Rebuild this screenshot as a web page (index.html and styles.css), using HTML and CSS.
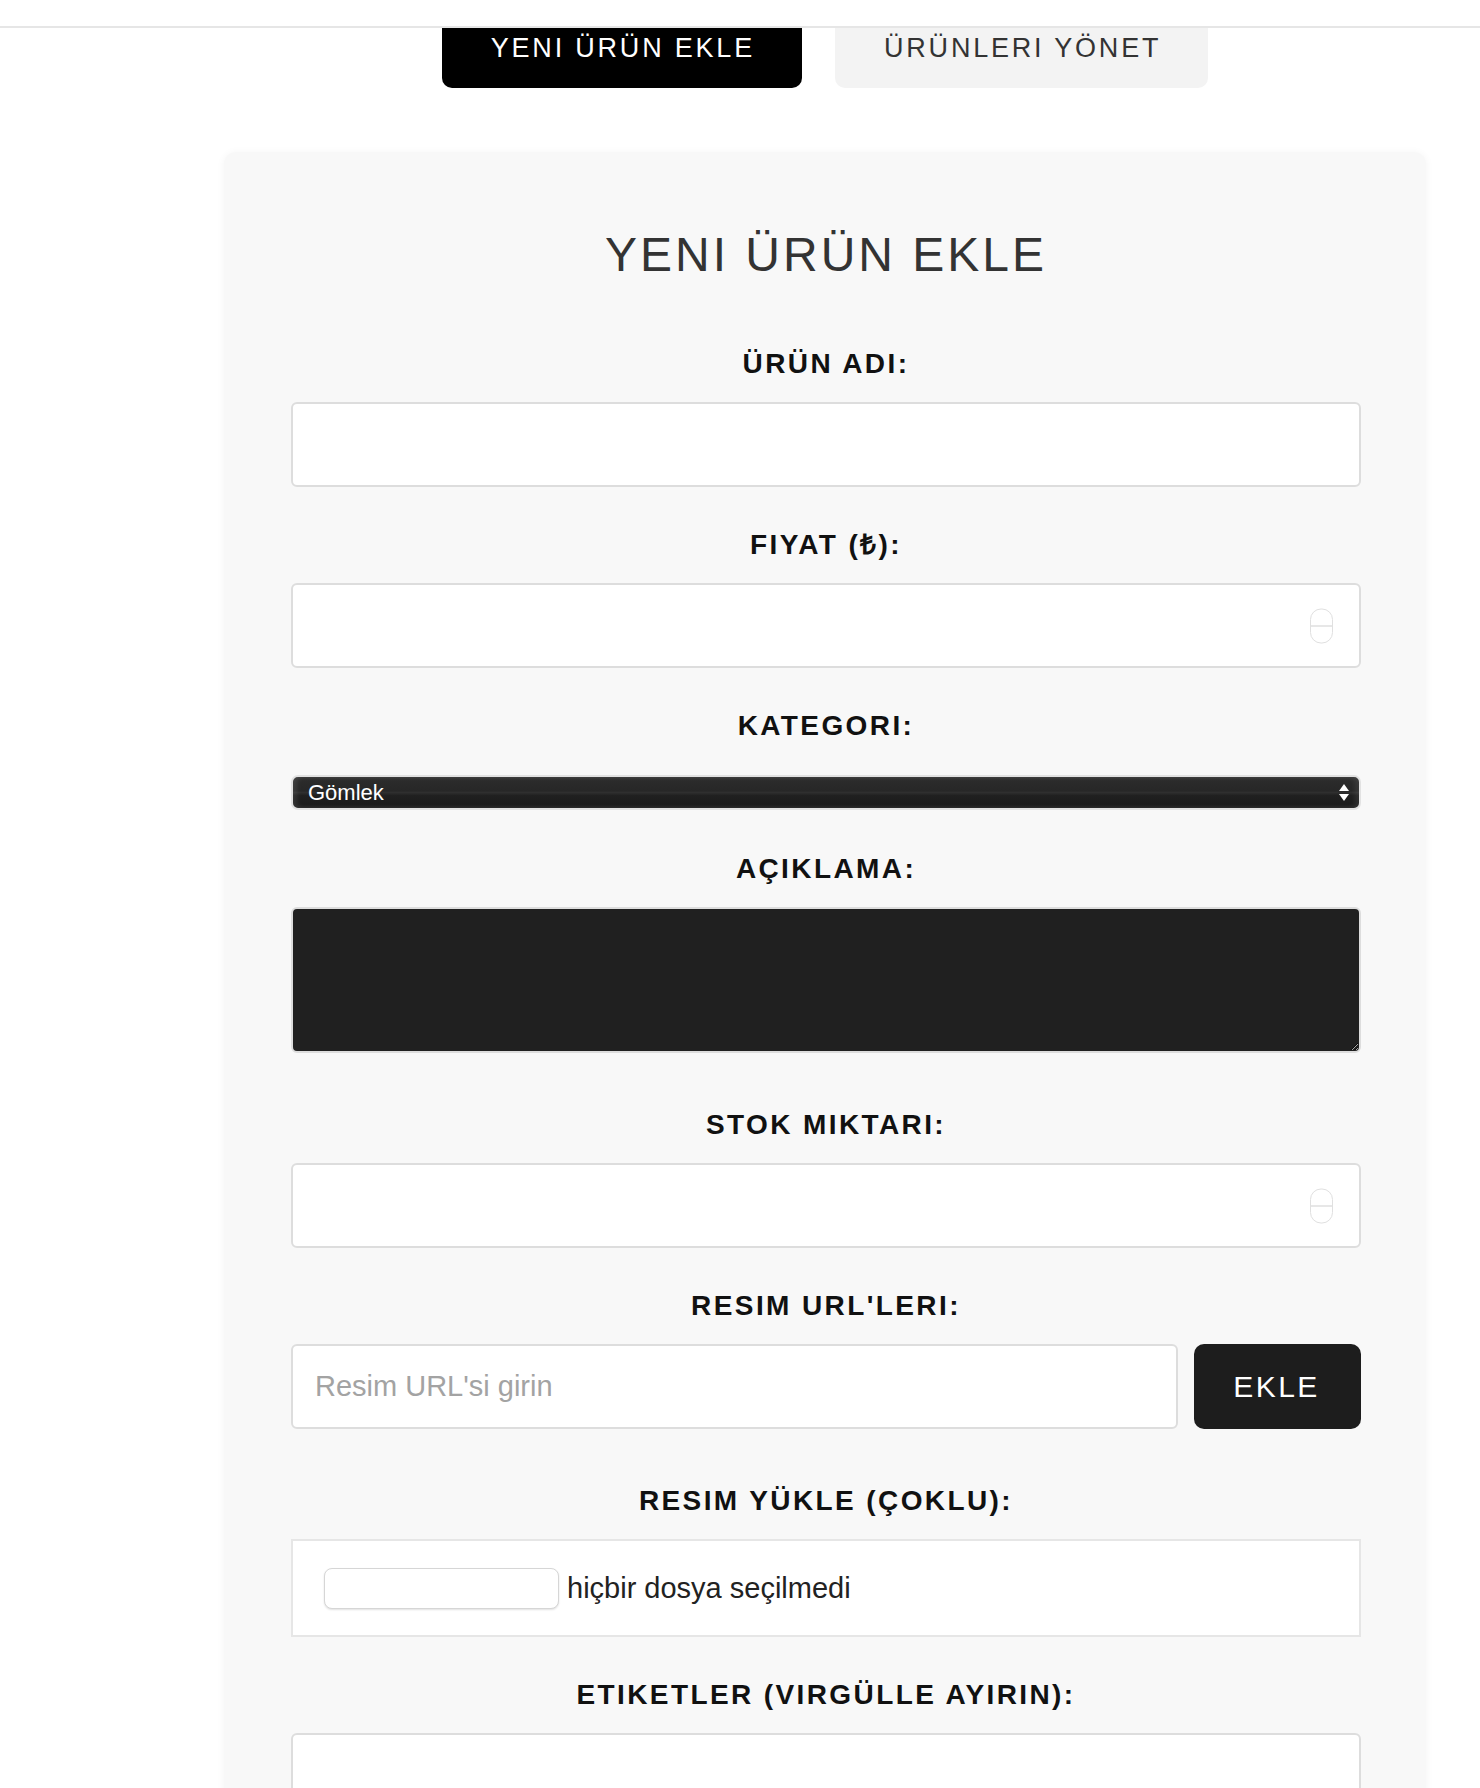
FILE: index.html
```html
<!DOCTYPE html>
<html lang="tr">
<head>
<meta charset="utf-8">
<title>Yeni Ürün Ekle</title>
<link rel="stylesheet" href="styles.css">
</head>
<body>
<header class="topbar"></header>
<main class="main">
  <nav class="tabs">
    <button type="button" class="tab tab-active">YENI ÜRÜN EKLE</button>
    <button type="button" class="tab">ÜRÜNLERI YÖNET</button>
  </nav>

  <section class="card">
    <h1 class="card-title">YENI ÜRÜN EKLE</h1>
    <form class="form">
      <div class="group">
        <label class="label">ÜRÜN ADI:</label>
        <input class="field" type="text">
      </div>
      <div class="group">
        <label class="label">FIYAT (₺):</label>
        <div class="number-wrap">
          <input class="field field-number" type="number">
          <span class="spinner"></span>
        </div>
      </div>
      <div class="group group-select">
        <label class="label">KATEGORI:</label>
        <div class="select-wrap">
          <select class="select">
            <option>Gömlek</option>
            <option>Pantolon</option>
            <option>Ceket</option>
          </select>
          <span class="select-arrows"><span class="arrow-up"></span><span class="arrow-down"></span></span>
        </div>
      </div>
      <div class="group group-extra">
        <label class="label">AÇIKLAMA:</label>
        <textarea class="textarea"></textarea>
      </div>
      <div class="group">
        <label class="label">STOK MIKTARI:</label>
        <div class="number-wrap">
          <input class="field field-number" type="number">
          <span class="spinner"></span>
        </div>
      </div>
      <div class="group group-extra">
        <label class="label">RESIM URL'LERI:</label>
        <div class="url-row">
          <input class="field field-url" type="text" placeholder="Resim URL'si girin">
          <button type="button" class="add-btn">EKLE</button>
        </div>
      </div>
      <div class="group">
        <label class="label">RESIM YÜKLE (ÇOKLU):</label>
        <div class="file-box">
          <button type="button" class="file-btn"></button>
          <span class="file-text">hiçbir dosya seçilmedi</span>
        </div>
      </div>
      <div class="group">
        <label class="label">ETIKETLER (VIRGÜLLE AYIRIN):</label>
        <input class="field" type="text">
      </div>
      <div class="group">
        <button type="submit" class="submit-btn">ÜRÜNÜ EKLE</button>
      </div>
    </form>
  </section>
</main>
</body>
</html>
```

FILE: styles.css
```css
html {
  scrollbar-width: none;
}
html::-webkit-scrollbar {
  display: none;
}
body {
  margin: 0;
  background: #ffffff;
  font-family: "Liberation Sans", Arial, Helvetica, sans-serif;
  color: #111;
}

.topbar {
  height: 26px;
  background: #fff;
  border-bottom: 2px solid #e6e6e6;
}

.main {
  width: 1310px;
  margin-left: 170px;
  display: flex;
  flex-direction: column;
  align-items: center;
}

.tabs {
  display: flex;
  gap: 33px;
  margin-bottom: 64px;
}

.tab {
  height: 60px;
  padding: 5px 47px 0 49px;
  display: flex;
  align-items: flex-start;
  border: none;
  border-radius: 0 0 10px 10px;
  background: #f3f3f3;
  color: #333;
  font-family: "Liberation Sans", Arial, sans-serif;
  font-size: 27px;
  line-height: 30px;
  letter-spacing: 2.8px;
  cursor: pointer;
}

.tab-active {
  background: #000;
  color: #fff;
}

.card {
  box-sizing: border-box;
  width: 1202px;
  padding: 74px 65px 60px 67px;
  background: #f8f8f8;
  border-radius: 12px;
  box-shadow: 0 1px 8px rgba(0, 0, 0, 0.05);
}

.card-title {
  margin: 0 0 65px;
  text-align: center;
  font-size: 48px;
  line-height: 58px;
  font-weight: 400;
  letter-spacing: 3px;
  color: #333;
}

.form {
  display: flex;
  flex-direction: column;
  gap: 43px;
}

.group {
  display: flex;
  flex-direction: column;
}

.group-extra {
  margin-bottom: 14px;
}

.group-select {
  margin-bottom: 1px;
}

.label {
  display: block;
  margin-bottom: 23px;
  text-align: center;
  font-size: 28px;
  line-height: 30px;
  font-weight: 700;
  letter-spacing: 2.4px;
  color: #111;
}

.field {
  box-sizing: border-box;
  width: 100%;
  height: 85px;
  padding: 0 22px;
  background: #fff;
  border: 2px solid #dddddd;
  border-radius: 6px;
  font-family: "Liberation Sans", Arial, sans-serif;
  font-size: 29px;
  color: #222;
  outline: none;
}

.field::placeholder {
  color: #a3a3a3;
}

.field-number {
  -moz-appearance: textfield;
}
.field-number::-webkit-inner-spin-button,
.field-number::-webkit-outer-spin-button {
  -webkit-appearance: none;
  margin: 0;
}

.number-wrap {
  position: relative;
}

.spinner {
  position: absolute;
  right: 28px;
  top: 50%;
  transform: translateY(-50%);
  box-sizing: border-box;
  width: 23px;
  height: 35px;
  border: 1px solid #e0e0e0;
  border-radius: 11px;
}
.spinner::after {
  content: "";
  position: absolute;
  left: 0;
  right: 0;
  top: 16px;
  height: 1px;
  background: #cfcfcf;
}

.select-wrap {
  position: relative;
  margin-top: 11px;
}

.select {
  box-sizing: border-box;
  width: 100%;
  height: 35px;
  padding: 0 40px 0 15px;
  -webkit-appearance: none;
  appearance: none;
  border: 2px solid #e2e2e2;
  border-radius: 7px;
  background: linear-gradient(to bottom, #2d2d2d 0%, #272727 45%, #2f2f2f 50%, #202020 60%, #1a1a1a 100%);
  box-shadow: inset 4px 0 5px rgba(255, 255, 255, 0.1), inset -4px 0 5px rgba(255, 255, 255, 0.08);
  color: #fff;
  font-family: "Liberation Sans", Arial, sans-serif;
  font-size: 22px;
  outline: none;
}

.select-arrows {
  position: absolute;
  right: 12px;
  top: 9px;
  display: flex;
  flex-direction: column;
  gap: 3px;
  pointer-events: none;
}
.arrow-up {
  width: 0;
  height: 0;
  border-left: 5px solid transparent;
  border-right: 5px solid transparent;
  border-bottom: 7px solid #fff;
}
.arrow-down {
  width: 0;
  height: 0;
  border-left: 5px solid transparent;
  border-right: 5px solid transparent;
  border-top: 7px solid #fff;
}

.textarea {
  display: block;
  box-sizing: border-box;
  width: 100%;
  height: 146px;
  padding: 14px 20px;
  background: #202020;
  border: 2px solid #dddddd;
  border-radius: 6px;
  color: #fff;
  font-family: "Liberation Sans", Arial, sans-serif;
  font-size: 22px;
  resize: vertical;
  outline: none;
}

.url-row {
  display: flex;
  gap: 16px;
}

.field-url {
  flex: 1;
  width: auto;
}

.add-btn {
  flex: none;
  width: 167px;
  height: 85px;
  padding: 0 2px 0 0;
  border: none;
  border-radius: 10px;
  background: #1d1d1d;
  color: #fff;
  font-family: "Liberation Sans", Arial, sans-serif;
  font-size: 30px;
  letter-spacing: 2.4px;
  cursor: pointer;
}

.file-box {
  box-sizing: border-box;
  height: 98px;
  padding: 0 31px;
  display: flex;
  align-items: center;
  gap: 8px;
  background: #fff;
  border: 2px solid #e6e6e6;
}

.file-btn {
  width: 235px;
  height: 41px;
  background: #fff;
  border: 1px solid #d6d6d6;
  border-radius: 8px;
  box-shadow: 0 1px 2px rgba(0, 0, 0, 0.12);
  cursor: pointer;
}

.file-text {
  font-size: 29px;
  color: #222;
}

.submit-btn {
  height: 85px;
  border: none;
  border-radius: 10px;
  background: #000;
  color: #fff;
  font-family: "Liberation Sans", Arial, sans-serif;
  font-size: 28px;
  letter-spacing: 4px;
}
```
